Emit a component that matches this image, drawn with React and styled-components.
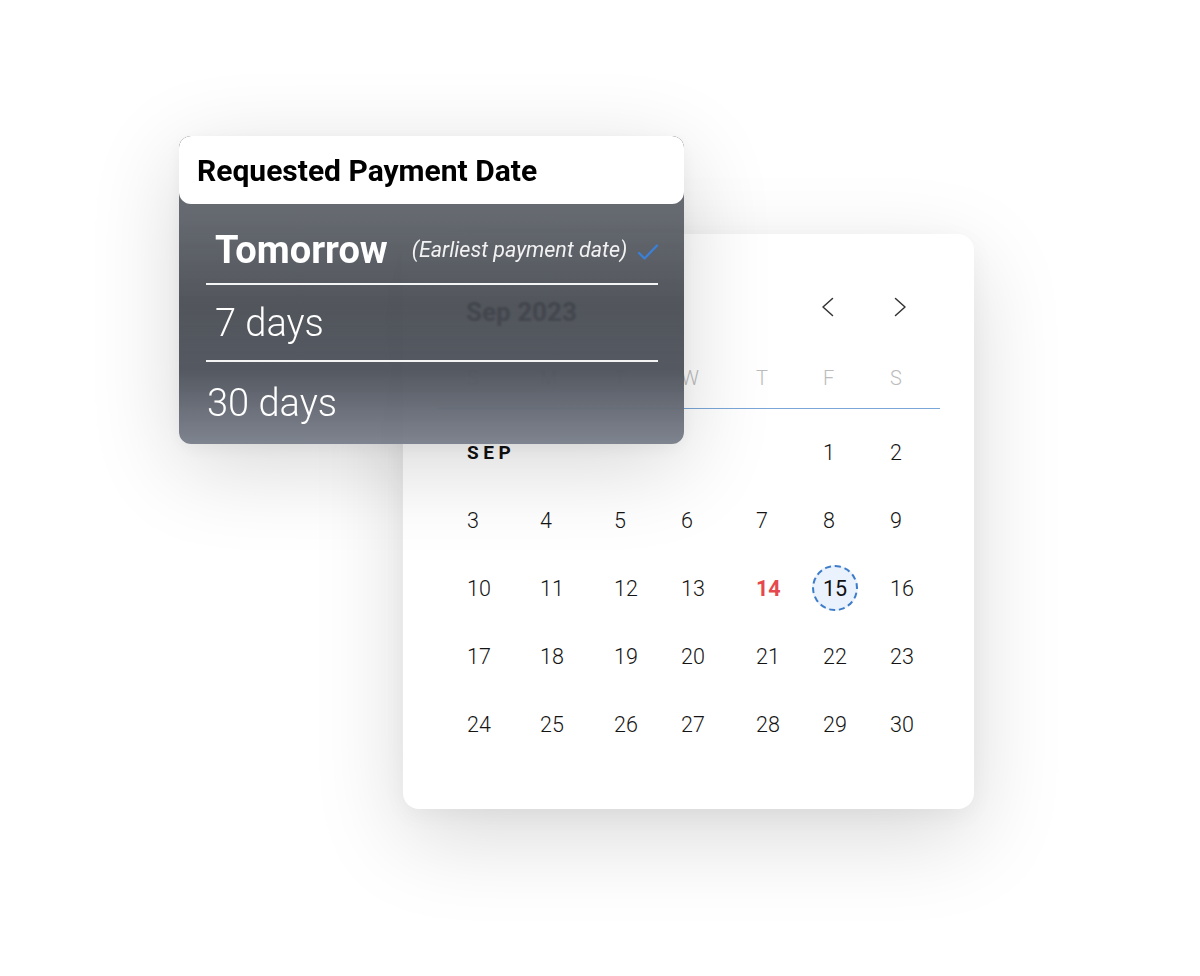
import React from "react";
import styled, { createGlobalStyle, css } from "styled-components";

const GlobalStyle = createGlobalStyle`
  html, body {
    margin: 0;
    padding: 0;
    background: #ffffff;
  }
  body {
    font-family: Roboto, "Noto Sans", "Liberation Sans", sans-serif;
    -webkit-font-smoothing: antialiased;
  }
`;

const Page = styled.div`
  position: relative;
  width: 1200px;
  height: 976px;
  overflow: hidden;
  background: #ffffff;
`;

const Stage = styled.div`
  padding: 234px 0 0 403px;
`;

/* ---------- calendar card ---------- */

const CalendarCard = styled.section`
  width: 571px;
  height: 575px;
  box-sizing: border-box;
  padding: 50px 34px 0;
  background: #ffffff;
  border-radius: 16px;
  box-shadow: 0 28px 90px rgba(0, 0, 0, 0.15), 0 6px 24px rgba(0, 0, 0, 0.04);
`;

const CalHeader = styled.header`
  display: flex;
  align-items: center;
  height: 56px;
  padding-left: 29px;
`;

const MonthTitle = styled.h2`
  flex: 1;
  margin: 0;
  font-size: 26px;
  font-weight: 700;
  color: #2b2b2b;
`;

const NavGroup = styled.div`
  display: flex;
  gap: 36px;
  margin: 0 22px 10px 0;
`;

const NavButton = styled.button`
  width: 36px;
  height: 36px;
  padding: 0;
  border: 0;
  background: transparent;
  display: flex;
  align-items: center;
  justify-content: center;
  color: #333;
`;

const columns = "73px 74px 67px 75px 67px 67px 1fr";

const WeekRow = styled.div`
  display: grid;
  grid-template-columns: ${columns};
  align-items: center;
  height: 69px;
  box-sizing: border-box;
  padding: 8px 0 0 30px;
  border-bottom: 1.5px solid #7aa6d8;
`;

const WeekLabel = styled.span`
  font-size: 20px;
  font-weight: 300;
  color: #bcbcbc;
`;

const DayGrid = styled.div`
  display: grid;
  grid-template-columns: ${columns};
  grid-auto-rows: 68px;
  align-items: center;
  padding: 9px 0 0 30px;
`;

const MonthTag = styled.span`
  grid-column: span 5;
  font-size: 19px;
  font-weight: 700;
  letter-spacing: 4.6px;
  color: #111;
`;

const Day = styled.span`
  justify-self: start;
  position: relative;
  font-size: 21.5px;
  font-weight: 300;
  color: #141414;

  ${(p) =>
    p.$today &&
    css`
      font-weight: 700;
      color: #e5484d;
    `}

  ${(p) =>
    p.$selected &&
    css`
      font-weight: 400;
      color: #111;
      &::before {
        content: "";
        position: absolute;
        left: 50%;
        top: 50%;
        width: 42px;
        height: 42px;
        transform: translate(-50%, -50%);
        border-radius: 50%;
        border: 2px dashed #3d7cc9;
        background: #e9f2fd;
        z-index: -1;
      }
    `}
`;

const DayCell = styled.span`
  position: relative;
  z-index: 0;
`;

/* ---------- payment date dropdown ---------- */

const Dropdown = styled.div`
  position: absolute;
  left: 179px;
  top: 136px;
  width: 505px;
  height: 308px;
  border-radius: 12px;
  overflow: hidden;
  background: linear-gradient(
    180deg,
    rgba(92, 95, 103, 0.9) 0%,
    rgba(84, 88, 96, 0.9) 26%,
    rgba(67, 71, 78, 0.92) 55%,
    rgba(74, 78, 87, 0.94) 76%,
    rgba(116, 122, 134, 0.92) 100%
  );
  backdrop-filter: blur(0.8px);
  box-shadow: 0 22px 90px rgba(0, 0, 0, 0.16), 0 4px 20px rgba(0, 0, 0, 0.05);
  display: flex;
  flex-direction: column;
`;

const DropdownTitle = styled.div`
  height: 68px;
  flex-shrink: 0;
  display: flex;
  align-items: center;
  padding-left: 18px;
  background: #ffffff;
  border-radius: 12px;
  font-size: 30px;
  font-weight: 700;
  color: #000;
`;

const Option = styled.div`
  display: flex;
  align-items: center;
  box-sizing: border-box;
  height: ${(p) => p.$h}px;
  padding: ${(p) => p.$pt || 0}px 0 0 ${(p) => p.$pl}px;
  color: #ffffff;
`;

const OptionMain = styled.span`
  font-size: 38px;
  font-weight: ${(p) => (p.$bold ? 700 : 300)};
`;

const OptionHint = styled.span`
  margin-left: 24px;
  font-size: 21.5px;
  font-style: italic;
  font-weight: 400;
  color: #f2f2f2;
`;

const CheckMark = styled.svg`
  margin-left: 10px;
  margin-top: 4px;
`;

const Divider = styled.hr`
  margin: 0 26px 0 27px;
  border: 0;
  height: 2px;
  background: #f4f4f4;
  flex-shrink: 0;
`;

const Chevron = ({ dir }) => (
  <svg width="14" height="20" viewBox="0 0 14 20" fill="none">
    <path
      d={dir === "left" ? "M11.5 1.5 L2 10 L11.5 18.5" : "M2.5 1.5 L12 10 L2.5 18.5"}
      stroke="#333"
      strokeWidth="1.5"
      strokeLinecap="round"
      strokeLinejoin="round"
    />
  </svg>
);

const weekdays = ["S", "M", "T", "W", "T", "F", "S"];

const weeks = [
  [3, 4, 5, 6, 7, 8, 9],
  [10, 11, 12, 13, 14, 15, 16],
  [17, 18, 19, 20, 21, 22, 23],
  [24, 25, 26, 27, 28, 29, 30],
];

export default function App() {
  return (
    <>
      <GlobalStyle />
      <Page>
        <Stage>
          <CalendarCard>
            <CalHeader>
              <MonthTitle>Sep 2023</MonthTitle>
              <NavGroup>
                <NavButton aria-label="Previous month">
                  <Chevron dir="left" />
                </NavButton>
                <NavButton aria-label="Next month">
                  <Chevron dir="right" />
                </NavButton>
              </NavGroup>
            </CalHeader>
            <WeekRow>
              {weekdays.map((d, i) => (
                <WeekLabel key={i}>{d}</WeekLabel>
              ))}
            </WeekRow>
            <DayGrid>
              <MonthTag>SEP</MonthTag>
              <Day>1</Day>
              <Day>2</Day>
              {weeks.flat().map((n) => (
                <DayCell key={n}>
                  <Day $today={n === 14} $selected={n === 15}>
                    {n}
                  </Day>
                </DayCell>
              ))}
            </DayGrid>
          </CalendarCard>
        </Stage>

        <Dropdown>
          <DropdownTitle>Requested Payment Date</DropdownTitle>
          <Option $h={79} $pt={12} $pl={36}>
            <OptionMain $bold>Tomorrow</OptionMain>
            <OptionHint>(Earliest payment date)</OptionHint>
            <CheckMark width="22" height="18" viewBox="0 0 22 18" fill="none">
              <path
                d="M2 10 L7.5 15.5 L20 2.5"
                stroke="#3b7fd6"
                strokeWidth="2.4"
                strokeLinecap="round"
                strokeLinejoin="round"
              />
            </CheckMark>
          </Option>
          <Divider />
          <Option $h={75} $pl={36}>
            <OptionMain>7 days</OptionMain>
          </Option>
          <Divider />
          <Option $h={82} $pl={28}>
            <OptionMain>30 days</OptionMain>
          </Option>
        </Dropdown>
      </Page>
    </>
  );
}
